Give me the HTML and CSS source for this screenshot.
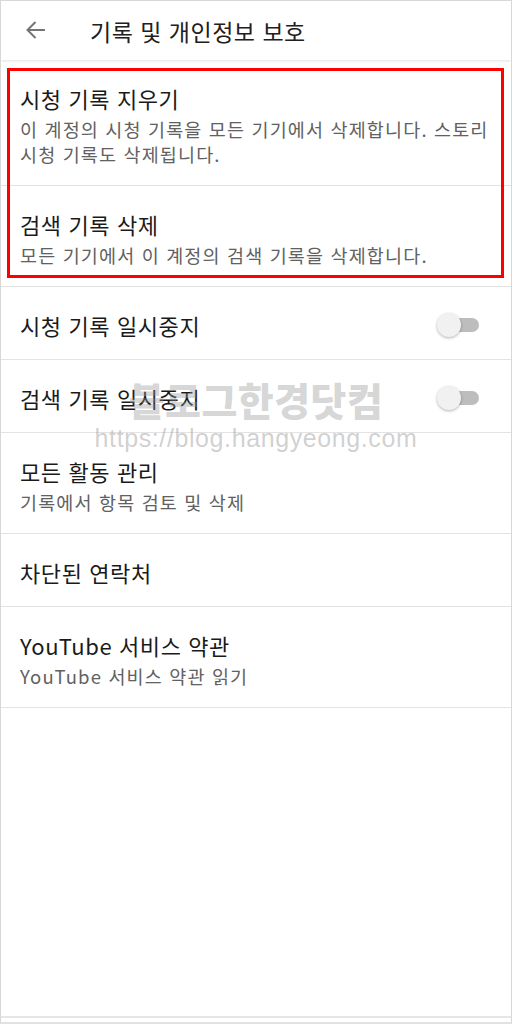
FILE: index.html
```html
<!DOCTYPE html>
<html lang="ko">
<head>
<meta charset="utf-8">
<link rel="stylesheet" href="styles.css">
</head>
<body>
<div class="screen">
  <header class="appbar">
    <svg class="back" width="24" height="24" viewBox="0 0 24 24"><path d="M21 12H3.5M11.5 4L3.5 12L11.5 20" fill="none" stroke="#757575" stroke-width="2"/></svg>
    <h1 class="title">기록 및 개인정보 보호</h1>
  </header>
  <main class="list">
    <div class="item">
      <div class="item-text">
        <div class="item-title">시청 기록 지우기</div>
        <div class="item-sub">이 계정의 시청 기록을 모든 기기에서 삭제합니다. 스토리 시청 기록도 삭제됩니다.</div>
      </div>
    </div>
    <div class="item">
      <div class="item-text">
        <div class="item-title">검색 기록 삭제</div>
        <div class="item-sub">모든 기기에서 이 계정의 검색 기록을 삭제합니다.</div>
      </div>
    </div>
    <div class="item">
      <div class="item-text">
        <div class="item-title">시청 기록 일시중지</div>
      </div>
      <div class="switch"><span class="knob"></span></div>
    </div>
    <div class="item">
      <div class="item-text">
        <div class="item-title">검색 기록 일시중지</div>
      </div>
      <div class="switch"><span class="knob"></span></div>
    </div>
    <div class="item">
      <div class="item-text">
        <div class="item-title">모든 활동 관리</div>
        <div class="item-sub">기록에서 항목 검토 및 삭제</div>
      </div>
    </div>
    <div class="item">
      <div class="item-text">
        <div class="item-title">차단된 연락처</div>
      </div>
    </div>
    <div class="item">
      <div class="item-text">
        <div class="item-title">YouTube 서비스 약관</div>
        <div class="item-sub">YouTube 서비스 약관 읽기</div>
      </div>
    </div>
  </main>
  <div class="bottom-bar"></div>
  <div class="highlight"></div>
  <div class="watermark">
    <div class="wm-name">블로그한경닷컴</div>
    <div class="wm-url">https://blog.hangyeong.com</div>
  </div>
</div>
</body>
</html>
```
FILE: styles.css
```css
html, body {
  margin: 0;
  padding: 0;
  background: #ffffff;
}
.screen {
  position: relative;
  width: 512px;
  height: 1024px;
  box-sizing: border-box;
  border: 1px solid #d8d8d8;
  border-bottom: 2px solid #e2e2e2;
  display: flex;
  flex-direction: column;
  font-family: "Noto Sans CJK KR", "Noto Sans", sans-serif;
  overflow: hidden;
}
.appbar {
  height: 59px;
  flex: none;
  display: flex;
  align-items: center;
  background: #fff;
  box-shadow: 0 1px 3px rgba(0,0,0,0.12);
  position: relative;
  z-index: 1;
}
.back {
  margin-left: 23px;
  margin-top: -2px;
  width: 24px;
  height: 24px;
}
.title {
  margin: 0 0 0 42px;
  font-size: 23px;
  font-weight: 400;
  color: #202020;
  line-height: 30px;
  letter-spacing: 0.5px;
}
.list {
  flex: 1;
  display: flex;
  flex-direction: column;
}
.item {
  display: flex;
  align-items: center;
  padding: 22px 12px 18px 19px;
  border-bottom: 1px solid #e3e3e3;
}
.item-text {
  flex: 1;
  min-width: 0;
}
.item-title {
  font-size: 22px;
  line-height: 32px;
  color: #1a1a1a;
  letter-spacing: 0.6px;
}
.item-sub {
  margin-top: 3px;
  font-size: 18.5px;
  line-height: 25px;
  color: #616161;
  letter-spacing: 1.15px;
}
.switch {
  position: relative;
  width: 33px;
  height: 14px;
  margin-right: 20px;
  border-radius: 7px;
  background: #bdbdbd;
  flex: none;
}
.knob {
  position: absolute;
  left: -9px;
  top: -5px;
  width: 24px;
  height: 24px;
  border-radius: 50%;
  background: #f1f1f1;
  box-shadow: 0 1px 3px rgba(0,0,0,0.3);
}
.bottom-bar {
  height: 4px;
  flex: none;
  border-top: 2px solid #e6e6e6;
}
.highlight {
  position: absolute;
  left: 6px;
  top: 67px;
  width: 491px;
  height: 204px;
  border: 3px solid #ff0000;
  pointer-events: none;
}
.watermark {
  position: absolute;
  left: 0;
  right: 0;
  top: 375px;
  text-align: center;
  pointer-events: none;
}
.wm-name {
  font-family: "Noto Sans CJK KR", sans-serif;
  font-weight: 900;
  font-size: 39px;
  line-height: 46px;
  color: rgba(150,150,150,0.4);
  letter-spacing: 0.5px;
}
.wm-url {
  font-family: "Liberation Sans", Arial, sans-serif;
  font-size: 25px;
  line-height: 32px;
  color: rgba(150,150,150,0.45);
  letter-spacing: 0.6px;
}
```
